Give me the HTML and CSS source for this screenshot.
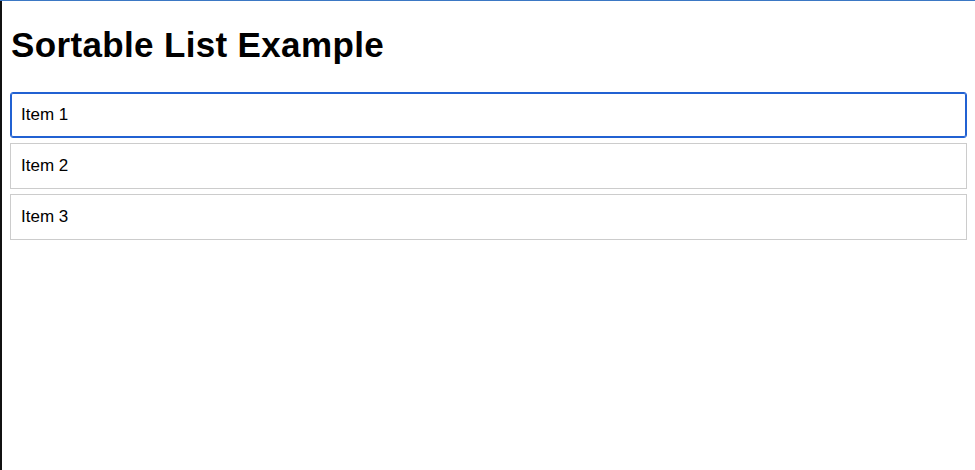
FILE: index.html
```html
<!DOCTYPE html>
<html lang="en">
<head>
<meta charset="utf-8">
<title>Sortable List Example</title>
<link rel="stylesheet" href="styles.css">
</head>
<body>
<div class="topline"></div>
<div class="frame">
  <div class="edge"></div>
  <main class="page">
    <h1 class="title">Sortable List Example</h1>
    <ul class="list">
      <li class="item item-focused" tabindex="0">Item 1</li>
      <li class="item" tabindex="0">Item 2</li>
      <li class="item" tabindex="0">Item 3</li>
    </ul>
  </main>
</div>
</body>
</html>
```

FILE: styles.css
```css
html, body {
  margin: 0;
  padding: 0;
  height: 100%;
  background: #ffffff;
}
body {
  display: flex;
  flex-direction: column;
  font-family: "Liberation Sans", Arial, sans-serif;
  color: #000;
}
.topline {
  height: 1px;
  background: #3b78c4;
  flex: none;
}
.frame {
  flex: 1;
  display: flex;
}
.edge {
  width: 2px;
  background: #111111;
  flex: none;
}
.page {
  flex: 1;
  padding: 8px;
}
.title {
  font-size: 35px;
  line-height: 40px;
  font-weight: bold;
  letter-spacing: 0.35px;
  margin: 16px 0 27px 1px;
}
.list {
  list-style: none;
  margin: 0;
  padding: 0;
  display: flex;
  flex-direction: column;
  gap: 5px;
}
.item {
  border: 1px solid #cccccc;
  padding: 12px 9px 12px 10px;
  font-size: 17px;
  line-height: 20px;
  background: #fff;
  outline: none;
}
.item-focused {
  border-color: #2161d2;
  box-shadow: inset 0 0 0 1px #2161d2;
  border-radius: 3px;
}
```
